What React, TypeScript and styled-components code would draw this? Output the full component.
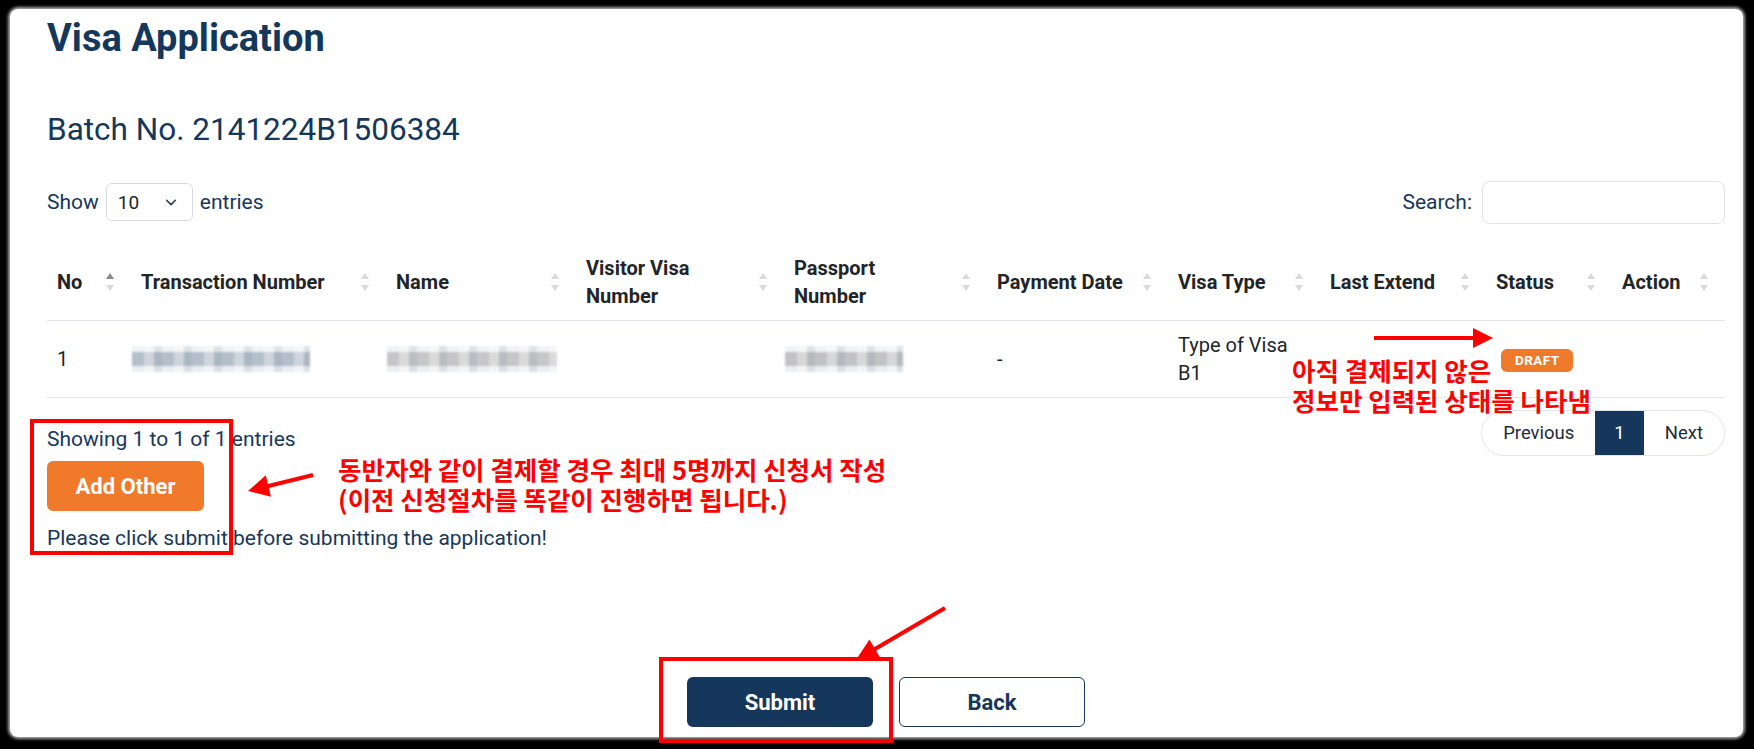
import styled, { createGlobalStyle } from 'styled-components';

const GlobalStyle = createGlobalStyle`
  html, body {
    margin: 0;
    padding: 0;
    background: #000;
  }
  body {
    font-family: Roboto, "Liberation Sans", "Noto Sans CJK KR", sans-serif;
  }
`;

type Col = { label: string[]; width: number; active?: boolean };

const columns: Col[] = [
  { label: ['No'], width: 84, active: true },
  { label: ['Transaction Number'], width: 255 },
  { label: ['Name'], width: 190 },
  { label: ['Visitor Visa', 'Number'], width: 208 },
  { label: ['Passport', 'Number'], width: 203 },
  { label: ['Payment Date'], width: 181 },
  { label: ['Visa Type'], width: 152 },
  { label: ['Last Extend'], width: 166 },
  { label: ['Status'], width: 126 },
  { label: ['Action'], width: 113 },
];

// arrow with a triangle head at (x2, y2)
const arrowHead = (x1: number, y1: number, x2: number, y2: number, len = 20, half = 10) => {
  const dx = x2 - x1;
  const dy = y2 - y1;
  const d = Math.hypot(dx, dy);
  const ux = dx / d;
  const uy = dy / d;
  const bx = x2 - ux * len;
  const by = y2 - uy * len;
  return {
    line: { x1, y1, x2: bx + ux * 2, y2: by + uy * 2 },
    points: `${x2},${y2} ${bx - uy * half},${by + ux * half} ${bx + uy * half},${by - ux * half}`,
  };
};

const arrows = [
  arrowHead(1364, 329, 1483, 329, 20, 10),
  arrowHead(303, 466, 238, 482, 21, 11),
  arrowHead(935, 599, 846, 651, 22, 11),
];

const SortIcon = ({ active }: { active?: boolean }) => (
  <SortMark width="8" height="18" viewBox="0 0 8 18">
    <polygon points="0,6 4,0 8,6" fill={active ? '#8a8a8a' : '#d9d9d9'} />
    <polygon points="0,12 8,12 4,18" fill="#d9d9d9" />
  </SortMark>
);

export default function App() {
  return (
    <>
      <GlobalStyle />
      <Frame>
        <Card>
          <Title>Visa Application</Title>
          <Batch>Batch No. 2141224B1506384</Batch>

          <TopBar>
            <Length>
              Show
              <Select>
                <span>10</span>
                <svg width="14" height="14" viewBox="0 0 16 16">
                  <path d="M3 6l5 5 5-5" fill="none" stroke="#343a40" strokeWidth="1.8" strokeLinecap="round" strokeLinejoin="round" />
                </svg>
              </Select>
              entries
            </Length>
            <SearchBox>
              Search:
              <SearchInput />
            </SearchBox>
          </TopBar>

          <Table>
            <colgroup>
              {columns.map((c) => (
                <col key={c.label.join(' ')} style={{ width: c.width }} />
              ))}
            </colgroup>
            <thead>
              <tr>
                {columns.map((c) => (
                  <Th key={c.label.join(' ')}>
                    {c.label.map((l, i) => (
                      <span key={l}>
                        {i > 0 && <br />}
                        {l}
                      </span>
                    ))}
                    <SortIcon active={c.active} />
                  </Th>
                ))}
              </tr>
            </thead>
            <tbody>
              <tr>
                <Td>1</Td>
                <Td>
                  <Blur $w={178} $tone="#b4bfcc" />
                </Td>
                <Td>
                  <Blur $w={170} $tone="#c6c6c8" />
                </Td>
                <Td />
                <Td>
                  <Blur $w={118} $tone="#c2c2c4" />
                </Td>
                <Td>-</Td>
                <Td>
                  Type of Visa
                  <br />
                  B1
                </Td>
                <Td />
                <Td>
                  <Badge>DRAFT</Badge>
                </Td>
                <Td />
              </tr>
            </tbody>
          </Table>

          <Footer>
            <Info>Showing 1 to 1 of 1 entries</Info>
            <Pager>
              <PageItem>Previous</PageItem>
              <PageItem $active>1</PageItem>
              <PageItem>Next</PageItem>
            </Pager>
          </Footer>

          <AddButton>Add Other</AddButton>
          <Notice>Please click submit before submitting the application!</Notice>

          <Actions>
            <PrimaryButton>Submit</PrimaryButton>
            <OutlineButton>Back</OutlineButton>
          </Actions>

          {/* annotations drawn over the page */}
          <MarkBox $left={20} $top={410} $w={203} $h={136} />
          <MarkBox $left={649} $top={648} $w={234} $h={86} />
          <Arrows>
            {arrows.map((a, i) => (
              <g key={i}>
                <line {...a.line} stroke="#ff0000" strokeWidth="4" />
                <polygon points={a.points} fill="#ff0000" />
              </g>
            ))}
          </Arrows>
          <Note $left={328} $top={445}>
            동반자와 같이 결제할 경우 최대 5명까지 신청서 작성
            <br />
            (이전 신청절차를 똑같이 진행하면 됩니다.)
          </Note>
          <Note $left={1282} $top={346}>
            아직 결제되지 않은
            <br />
            정보만 입력된 상태를 나타냄
          </Note>
        </Card>
      </Frame>
    </>
  );
}

const Frame = styled.div`
  width: 1754px;
  height: 749px;
  box-sizing: border-box;
  padding: 9px 11px 12px 10px;
  background: #000;
`;

const Card = styled.div`
  position: relative;
  height: 100%;
  box-sizing: border-box;
  display: flex;
  flex-direction: column;
  padding: 6px 18px 10px 37px;
  background: #fff;
  border-radius: 8px;
  box-shadow: 0 0 3px 2px rgba(185, 185, 185, 0.9);
  color: #16375c;
  font-size: 21px;
`;

const Title = styled.h1`
  margin: 0;
  font-size: 38px;
  line-height: 46px;
  font-weight: 700;
  color: #14375c;
`;

const Batch = styled.h3`
  margin: 50px 0 0;
  font-size: 31.5px;
  line-height: 38px;
  font-weight: 400;
  color: #14375c;
`;

//-----------------------------------------------------------
const TopBar = styled.div`
  display: flex;
  justify-content: space-between;
  align-items: center;
  height: 44px;
  margin-top: 31px;
`;

const Length = styled.label`
  display: flex;
  align-items: center;
  gap: 7px;
`;

const Select = styled.div`
  display: flex;
  align-items: center;
  justify-content: space-between;
  box-sizing: border-box;
  width: 87px;
  height: 38px;
  padding: 0 14px 0 11px;
  border: 1px solid #d6dae0;
  border-radius: 6px;
  color: #212529;
  font-size: 19px;
`;

const SearchBox = styled.label`
  display: flex;
  align-items: center;
  gap: 10px;
`;

const SearchInput = styled.div`
  box-sizing: border-box;
  width: 243px;
  height: 43px;
  border: 1px solid #e0e3e8;
  border-radius: 8px;
`;

//-----------------------------------------------------------
const Table = styled.table`
  width: 100%;
  margin-top: 20px;
  border-collapse: collapse;
  table-layout: fixed;
  color: #212529;
  font-size: 20px;
  line-height: 28px;
`;

const Th = styled.th`
  position: relative;
  padding: 10px 28px 10px 10px;
  text-align: left;
  vertical-align: middle;
  font-weight: 700;
  border-bottom: 1px solid #e3e6ea;
  white-space: nowrap;
`;

const SortMark = styled.svg`
  position: absolute;
  right: 17px;
  top: 50%;
  transform: translateY(-50%);
`;

const Td = styled.td`
  padding: 10px;
  vertical-align: middle;
  border-bottom: 1px solid #e3e6ea;
  height: 56px;
`;

// pixelated blur that hides personal data
const Blur = styled.div<{ $w: number; $tone: string }>`
  width: ${(p) => p.$w}px;
  height: 26px;
  margin-left: -9px;
  background:
    repeating-linear-gradient(
      90deg,
      rgba(255, 255, 255, 0) 0 12px,
      rgba(255, 255, 255, 0.35) 12px 22px,
      rgba(120, 130, 145, 0.15) 22px 30px
    ),
    linear-gradient(
      180deg,
      #f1f2f4 0 22%,
      ${(p) => p.$tone} 22% 78%,
      #eceef1 78% 100%
    );
  filter: blur(1.2px);
`;

const Badge = styled.span`
  display: inline-block;
  margin-left: 5px;
  padding: 0 14px;
  height: 23px;
  line-height: 23px;
  border-radius: 6px;
  background: #ef7a2c;
  color: #fff;
  font-size: 13.5px;
  font-weight: 700;
  letter-spacing: 0.4px;
  vertical-align: middle;
`;

//-----------------------------------------------------------
const Footer = styled.div`
  display: flex;
  justify-content: space-between;
  align-items: flex-start;
  margin-top: 12px;
`;

const Info = styled.div`
  padding-top: 15px;
  line-height: 28px;
`;

const Pager = styled.div`
  display: flex;
  height: 46px;
  box-sizing: border-box;
  border: 1px solid #e1e4e8;
  border-radius: 23px;
  overflow: hidden;
`;

const PageItem = styled.div<{ $active?: boolean }>`
  padding: 0 ${(p) => (p.$active ? '19px' : '21px')};
  line-height: 44px;
  font-size: 18.5px;
  color: ${(p) => (p.$active ? '#fff' : '#1d2b3a')};
  background: ${(p) => (p.$active ? '#15375b' : 'transparent')};
  ${(p) => (p.$active ? 'margin: -1px 0; line-height: 46px;' : '')}
`;

const AddButton = styled.button`
  align-self: flex-start;
  width: 157px;
  height: 50px;
  margin-top: 5px;
  border: none;
  border-radius: 6px;
  background: #f07a2a;
  color: #fff;
  font-family: inherit;
  font-size: 22px;
  font-weight: 700;
`;

const Notice = styled.p`
  margin: 13px 0 0;
  line-height: 28px;
`;

const Actions = styled.div`
  display: flex;
  justify-content: center;
  gap: 26px;
  margin-top: auto;
`;

const PrimaryButton = styled.button`
  width: 186px;
  height: 50px;
  border: none;
  border-radius: 6px;
  background: #15375b;
  color: #fff;
  font-family: inherit;
  font-size: 22px;
  font-weight: 700;
`;

const OutlineButton = styled(PrimaryButton)`
  border: 1px solid #15375b;
  background: #fff;
  color: #15375b;
`;

//-----------------------------------------------------------
const MarkBox = styled.div<{ $left: number; $top: number; $w: number; $h: number }>`
  position: absolute;
  left: ${(p) => p.$left}px;
  top: ${(p) => p.$top}px;
  width: ${(p) => p.$w}px;
  height: ${(p) => p.$h}px;
  box-sizing: border-box;
  border: 4px solid #ff0000;
  pointer-events: none;
`;

const Arrows = styled.svg`
  position: absolute;
  left: 0;
  top: 0;
  width: 100%;
  height: 100%;
  overflow: visible;
  pointer-events: none;
`;

const Note = styled.div<{ $left: number; $top: number }>`
  position: absolute;
  left: ${(p) => p.$left}px;
  top: ${(p) => p.$top}px;
  color: #ff0000;
  font-family: "Noto Sans CJK KR", sans-serif;
  font-size: 25.5px;
  font-weight: 700;
  line-height: 30px;
  white-space: nowrap;
`;
